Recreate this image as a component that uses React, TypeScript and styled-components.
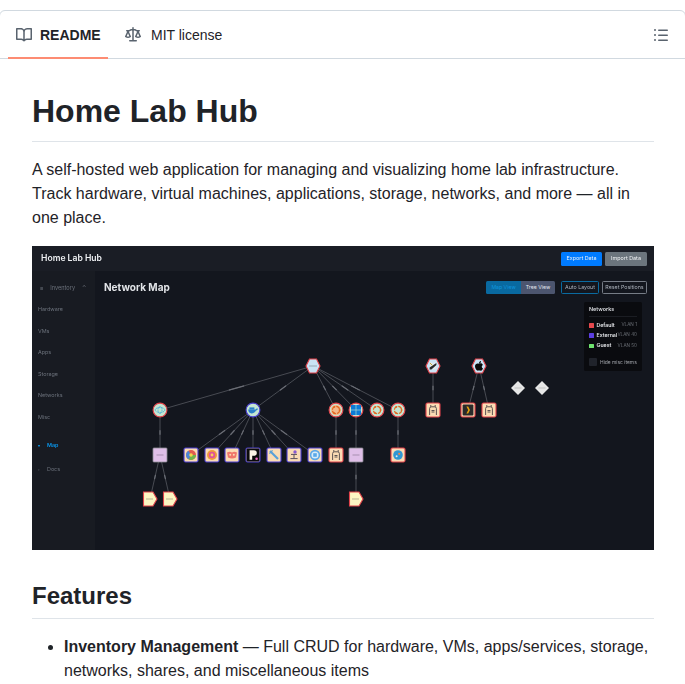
import React, { FC } from 'react';
import styled, { createGlobalStyle } from 'styled-components';

const GlobalStyle = createGlobalStyle`
    html, body {
        margin: 0;
        padding: 0;
        background: #ffffff;
    }
    #root {
        height: 684px;
        overflow: hidden;
    }
`;

const Box = styled.div`
    margin: 10px -1px 0 -1px;
    border: 1px solid #d1d9e0;
    border-radius: 6px;
    font-family: "Liberation Sans", Arial, sans-serif;
    color: #1f2328;
`;

const TabBar = styled.div`
    display: flex;
    align-items: stretch;
    height: 47px;
    padding-left: 8px;
    border-bottom: 1px solid #d1d9e0;
`;

const Tab = styled.div<{ $active?: boolean }>`
    display: flex;
    align-items: center;
    gap: ${(p) => (p.$active ? 8 : 10)}px;
    width: ${(p) => (p.$active ? '100px' : 'auto')};
    box-sizing: border-box;
    padding: 2px 8px 0;
    margin-left: ${(p) => (p.$active ? 0 : 9)}px;
    margin-bottom: -1px;
    font-size: 14px;
    font-weight: ${(p) => (p.$active ? 700 : 400)};
    border-bottom: 2px solid ${(p) => (p.$active ? '#fd8c73' : 'transparent')};
`;

const TabIcon = styled.svg`
    width: 16px;
    height: 16px;
    fill: #59636e;
    flex: none;
`;

const OutlineButton = styled.div`
    margin-left: auto;
    margin-right: 16px;
    padding-top: 1px;
    display: flex;
    align-items: center;
`;

const Article = styled.div`
    padding: 32px 31px 60px 32px;
    font-size: 16px;
    line-height: 24px;
`;

const Title = styled.h1`
    margin: 0 0 16px;
    padding-bottom: 10px;
    font-size: 32px;
    line-height: 40px;
    font-weight: 700;
    border-bottom: 1px solid #d1d9e0b3;
`;

const SubTitle = styled.h2`
    margin: 24px 0 16px;
    padding-bottom: 7px;
    font-size: 24px;
    line-height: 30px;
    font-weight: 700;
    border-bottom: 1px solid #d1d9e0b3;
`;

const Paragraph = styled.p`
    margin: 0 0 16px;
`;

const FeatureList = styled.ul`
    margin: 0;
    padding-left: 32px;
`;

/* the screenshot embedded in the readme */
const Shot = styled.div`
    width: 622px;
    height: 304px;
    margin-bottom: 31px;
    display: flex;
    flex-direction: column;
    background: #13161e;
    font-family: Inter, "Liberation Sans", sans-serif;
    line-height: 1;
    overflow: hidden;
`;

const ShotHeader = styled.div`
    height: 25px;
    flex: none;
    display: flex;
    align-items: center;
    gap: 3px;
    padding: 0 7px 0 9px;
    background: #1a1d25;
`;

const ShotBrand = styled.div`
    margin-right: auto;
    color: #eef0f3;
    font-size: 8.6px;
    font-weight: 600;
    filter: blur(0.25px);
`;

const HeaderButton = styled.div<{ $bg: string }>`
    width: ${(p) => (p.$bg === '#007bff' ? '41px' : '42px')};
    height: 14px;
    display: flex;
    align-items: center;
    justify-content: center;
    border-radius: 1.5px;
    background: ${(p) => p.$bg};
    color: #f2f4f6;
    font-size: 5.4px;
    filter: blur(0.2px);
`;

const ShotBody = styled.div`
    flex: 1;
    display: flex;
    min-height: 0;
`;

const Sidebar = styled.div`
    width: 63px;
    flex: none;
    padding-top: 14px;
    background: #181b22;
    box-sizing: border-box;
    display: flex;
    flex-direction: column;
    filter: blur(0.25px);
`;

const SideGroup = styled.div`
    display: flex;
    align-items: center;
    gap: 7px;
    padding-left: 8px;
    height: 7px;
    margin-bottom: 14.5px;
    color: #6c727c;
    font-size: 5.6px;
`;

const SideLink = styled.div<{ $active?: boolean; $top?: number }>`
    display: flex;
    align-items: center;
    gap: 6px;
    height: 7px;
    margin-top: ${(p) => p.$top ?? 0}px;
    margin-bottom: 14.5px;
    padding-left: 6px;
    color: ${(p) => (p.$active ? '#0a94e8' : '#6c727c')};
    font-size: 5.4px;
    font-weight: ${(p) => (p.$active ? 600 : 400)};
`;

const SideMark = styled.span`
    width: 3px;
    font-size: 4px;
    flex: none;
`;

const MainPanel = styled.div`
    flex: 1;
    position: relative;
    padding: 10px 7px 0 9px;
`;

const MapCanvas = styled.svg`
    position: absolute;
    inset: 0;
    width: 559px;
    height: 279px;
`;

const MainTop = styled.div`
    position: relative;
    display: flex;
    align-items: center;
    height: 13px;
    filter: blur(0.2px);
`;

const PageName = styled.div`
    margin-right: auto;
    padding-bottom: 2px;
    color: #e2e4e8;
    font-size: 10px;
    font-weight: 700;
`;

const ToggleGroup = styled.div`
    display: flex;
    margin-right: 6px;
    border-radius: 1.5px;
    overflow: hidden;
`;

const ToggleItem = styled.div<{ $on?: boolean }>`
    width: ${(p) => (p.$on ? 35 : 34)}px;
    height: 13px;
    display: flex;
    align-items: center;
    justify-content: center;
    background: ${(p) => (p.$on ? '#0969a0' : '#4c556f')};
    color: ${(p) => (p.$on ? '#0f95dc' : '#e4e7ef')};
    font-size: 5.2px;
`;

const LineButton = styled.div<{ $tone: string; $w: number }>`
    width: ${(p) => p.$w}px;
    height: 13px;
    margin-left: ${(p) => (p.$w > 40 ? 3 : 0)}px;
    box-sizing: border-box;
    display: flex;
    align-items: center;
    justify-content: center;
    border: 0.7px solid ${(p) => p.$tone};
    border-radius: 1.5px;
    color: #aab0ba;
    font-size: 5.3px;
    white-space: nowrap;
`;

const Legend = styled.div`
    position: absolute;
    top: 31px;
    right: 12px;
    width: 58px;
    height: 69px;
    box-sizing: border-box;
    padding: 5px;
    background: #0a0b0f;
    border-radius: 1.5px;
    display: flex;
    flex-direction: column;
    filter: blur(0.2px);
`;

const LegendTitle = styled.div`
    color: #d8dade;
    font-size: 5.4px;
    font-weight: 600;
    padding-bottom: 4px;
    border-bottom: 0.5px solid #1b1d23;
    margin-bottom: 3px;
`;

const LegendRow = styled.div`
    display: flex;
    align-items: center;
    height: 11px;
    font-size: 5.2px;
    color: #e4e6e9;
    font-weight: 600;
`;

const Swatch = styled.span<{ $c: string }>`
    width: 4.5px;
    height: 4.5px;
    margin-right: 3px;
    background: ${(p) => p.$c};
    border-radius: 0.5px;
`;

const Vlan = styled.span`
    margin-left: auto;
    color: #6c7077;
    font-weight: 400;
    font-size: 4.6px;
`;

const HideRow = styled.div`
    display: flex;
    align-items: center;
    gap: 3px;
    margin-top: 7px;
    color: #a2a5ab;
    font-size: 4.9px;
    white-space: nowrap;
`;

const HideCheck = styled.span`
    width: 8px;
    height: 8px;
    flex: none;
    border-radius: 1px;
    background: #20232b;
`;

const navItems = ['Hardware', 'VMs', 'Apps', 'Storage', 'Networks', 'Misc'];

const legend = [
    { name: 'Default', vlan: 'VLAN 1', color: '#e5484d' },
    { name: 'External', vlan: 'VLAN 40', color: '#5b3ee0' },
    { name: 'Guest', vlan: 'VLAN 50', color: '#6fe36f' },
];

const links: [number, number, number, number][] = [
    [313, 366, 160, 410], [313, 366, 253, 410], [313, 366, 336, 410], [313, 366, 356, 410],
    [313, 366, 377, 410], [313, 366, 398, 410],
    [160, 410, 160, 455], [160, 455, 150, 499], [160, 455, 170, 499],
    [253, 410, 191, 455], [253, 410, 212, 455], [253, 410, 232, 455], [253, 410, 253, 455],
    [253, 410, 274, 455], [253, 410, 294, 455], [253, 410, 315, 455],
    [336, 410, 336, 455], [356, 410, 356, 455], [356, 455, 356, 499], [398, 410, 398, 455],
    [433, 366, 433, 410], [479, 366, 468, 410], [479, 366, 489, 410],
];

const RED = '#e2434b';
const BLUE = '#4a3fd0';

const Hex: FC<{ x: number; y: number; children?: React.ReactNode }> = ({ x, y, children }) => (
    <g transform={`translate(${x} ${y})`}>
        <polygon points="-7,0 -3.5,-7 3.5,-7 7,0 3.5,7 -3.5,7" fill="#c9e3f5" stroke={RED} strokeWidth="1.1" />
        {children}
    </g>
);

const Round: FC<{ x: number; y: number; stroke?: string; children?: React.ReactNode }> = ({ x, y, stroke = RED, children }) => (
    <g transform={`translate(${x} ${y})`}>
        <circle r="6.9" fill="#c5e6d2" stroke={stroke} strokeWidth="1.1" />
        {children}
    </g>
);

const Tile: FC<{ x: number; y: number; stroke?: string; children?: React.ReactNode }> = ({ x, y, stroke = BLUE, children }) => (
    <g transform={`translate(${x} ${y})`}>
        <rect x="-7" y="-7" width="14" height="14" rx="1.6" fill="#fbdcb4" stroke={stroke} strokeWidth="1.1" />
        {children}
    </g>
);

const Lilac: FC<{ x: number; y: number }> = ({ x, y }) => (
    <g transform={`translate(${x} ${y})`}>
        <rect x="-7" y="-7" width="14" height="14" rx="0.8" fill="#dfbfe8" stroke="#8d8d94" strokeWidth="0.8" />
        <rect x="-3.5" y="-0.4" width="7" height="0.8" fill="#9a85a2" />
    </g>
);

const TagNode: FC<{ x: number; y: number }> = ({ x, y }) => (
    <g transform={`translate(${x} ${y})`}>
        <polygon points="-6.5,-7 3,-7 7,0 3,7 -6.5,7" fill="#fdf6c3" stroke={RED} strokeWidth="1.1" />
        <rect x="-4" y="-0.4" width="7" height="0.8" fill="#a8a288" />
    </g>
);

const Diamond: FC<{ x: number; y: number }> = ({ x, y }) => (
    <g transform={`translate(${x} ${y})`}>
        <polygon points="-7,0 0,-7 7,0 0,7" fill="#e6e6e6" />
        <rect x="-3.5" y="-0.3" width="7" height="0.6" fill="#a8a8a8" />
    </g>
);

const Ubuntu: FC = () => (
    <g>
        <circle r="3.6" fill="none" stroke="#e2681f" strokeWidth="1.1" strokeDasharray="4.6 1" />
        <circle cx="3.6" cy="0" r="0.9" fill="#e2681f" />
        <circle cx="-1.8" cy="3.1" r="0.9" fill="#e2681f" />
        <circle cx="-1.8" cy="-3.1" r="0.9" fill="#e2681f" />
    </g>
);

const Llama: FC = () => (
    <g fill="none" stroke="#4a4346" strokeWidth="0.9">
        <path d="M-3.4 5V-1.5Q-3.4-3.2-1.5-3.2H1.5Q3.4-3.2 3.4-1.5V5" />
        <path d="M-2.2-3.2V-5M2.2-3.2V-5" />
        <path d="M-1.5 0.5H1.5M-1.5 2H1.5" />
    </g>
);

const NetworkMap: FC = () => (
    <MapCanvas viewBox="95 271 559 279">
        {links.map(([x1, y1, x2, y2], i) => (
            <g key={i}>
                <line x1={x1} y1={y1} x2={x2} y2={y2} stroke="#55585f" strokeWidth="0.8" />
                <line
                    x1={x1 + (x2 - x1) * 0.45}
                    y1={y1 + (y2 - y1) * 0.45}
                    x2={x1 + (x2 - x1) * 0.55}
                    y2={y1 + (y2 - y1) * 0.55}
                    stroke="#6a6d75"
                    strokeWidth="1.2"
                />
            </g>
        ))}

        <Hex x={313} y={366}><rect x="-4" y="-0.4" width="8" height="0.8" fill="#8d9aa6" /></Hex>
        <Hex x={433} y={366}>
            <rect x="-3.4" y="-3.4" width="6.8" height="6.8" fill="#dfe8ee" />
            <path d="M-3.4 1.4L3.4-3V-1L-1.6 3.4H-3.4Z" fill="#26282a" />
            <path d="M-3-3L-.6-.6" stroke="#c8a22c" strokeWidth="1" />
        </Hex>
        <Hex x={479} y={366}>
            <path d="M0-2.2C1-3.2 3.6-3 3.8-1 2.4-.3 2.4 1.8 4 2.4 3.2 4.2 2 5 1 4.6.4 4.4-.4 4.4-1 4.6-2.2 5-4 2.4-4 .2-4-2.4-1.4-3.2 0-2.2ZM0-2.6C0-3.8.8-4.8 2-5 2.2-3.8 1.2-2.6 0-2.6Z" fill="#0a0a0a" />
        </Hex>

        <Round x={160} y={410}>
            <ellipse rx="4.8" ry="2.4" fill="none" stroke="#38a9d8" strokeWidth="1" strokeDasharray="1 0.6" />
            <ellipse rx="2" ry="3.6" fill="none" stroke="#38a9d8" strokeWidth="0.8" strokeDasharray="1 0.6" />
        </Round>
        <Round x={253} y={410} stroke={BLUE}>
            <path d="M-4.8-.4H2.6C3-1.4 3.8-1.6 5-1.2 4.4.4 3.2.6 2.8.8 2 2.6 0 3.4-1.4 3.4-3.6 3.4-4.8 1.6-4.8-.4Z" fill="#2b7fc9" />
            <rect x="-3.6" y="-2.6" width="5" height="2.2" fill="#2b7fc9" />
        </Round>
        <Round x={336} y={410}>
            <circle r="5.2" fill="#f3b98a" />
            <Ubuntu />
        </Round>
        <Round x={356} y={410}>
            <rect x="-5" y="-5" width="4.7" height="4.7" fill="#0b7cd6" />
            <rect x="0.3" y="-5" width="4.7" height="4.7" fill="#0b7cd6" />
            <rect x="-5" y="0.3" width="4.7" height="4.7" fill="#0b7cd6" />
            <rect x="0.3" y="0.3" width="4.7" height="4.7" fill="#0b7cd6" />
        </Round>
        <Round x={377} y={410}><Ubuntu /></Round>
        <Round x={398} y={410}><Ubuntu /></Round>

        <Lilac x={160} y={455} />
        <Lilac x={356} y={455} />

        <Tile x={191} y={455}>
            <circle r="5" fill="#e05a4f" />
            <path d="M0 0L5 0A5 5 0 0 1 -2.5 4.3Z" fill="#6cb44e" />
            <path d="M0 0L-2.5 4.3A5 5 0 0 1 -2.5-4.3Z" fill="#4a86d8" />
            <circle r="1.8" fill="#f4d44c" />
        </Tile>
        <Tile x={212} y={455}>
            <circle r="5" fill="#ee9a3c" />
            <circle r="3.2" fill="#e0509a" />
            <circle r="1.4" fill="#f7d25a" />
        </Tile>
        <Tile x={232} y={455}>
            <path d="M-5-2.4Q-2-4 0-2.4 2-4 5-2.4L4 2.6Q0 4.4-4 2.6Z" fill="#f0766a" />
            <circle cx="-1.8" cy="-.2" r="1" fill="#fbdcb4" />
            <circle cx="1.8" cy="-.2" r="1" fill="#fbdcb4" />
        </Tile>
        <Tile x={253} y={455}>
            <rect x="-6.4" y="-6.4" width="12.8" height="12.8" rx="1" fill="#0a0a0a" />
            <path d="M-3.4-4.8H1Q3.8-4.8 3.8-2 3.8.8 1 .8H-.8V4.8H-3.4Z" fill="#fbf4e6" />
            <circle cx="3.6" cy="3.8" r="1.3" fill="#f06ac0" />
        </Tile>
        <Tile x={274} y={455}>
            <path d="M-4-4L4 4" stroke="#5aa0d8" strokeWidth="2.2" />
            <path d="M-4.6-1.4L-1.4-4.6" stroke="#5aa0d8" strokeWidth="1.2" />
        </Tile>
        <Tile x={294} y={455}>
            <path d="M-3.6 3.6H3.6M0 3.6V-1M-3-.6H3" stroke="#5a5060" strokeWidth="1" fill="none" />
            <circle cx="1" cy="-3" r="1.7" fill="#8a5ad0" />
        </Tile>
        <Tile x={315} y={455}>
            <circle r="5.2" fill="#5aa8e8" />
            <circle r="3.6" fill="#d8ecf8" />
            <rect x="-1.8" y="-1.8" width="3.6" height="3.6" fill="#5aa8e8" />
        </Tile>
        <Tile x={336} y={455} stroke={RED}><Llama /></Tile>
        <Tile x={398} y={455} stroke={RED}>
            <circle r="4.8" fill="#2f97d4" />
            <circle cx="1.2" cy="-1.2" r="1.1" fill="#f0824a" />
            <circle cx="-1.4" cy="1.2" r="1" fill="#d8ecf8" />
        </Tile>
        <Tile x={433} y={410} stroke={RED}><Llama /></Tile>
        <Tile x={468} y={410} stroke={RED}>
            <rect x="-5.4" y="-5.4" width="10.8" height="10.8" rx="1" fill="#2a2a2a" />
            <path d="M-1.6-3.4H.2L2 0 .2 3.4H-1.6L.2 0Z" fill="#e5a00d" />
        </Tile>
        <Tile x={489} y={410} stroke={RED}><Llama /></Tile>

        <TagNode x={150} y={499} />
        <TagNode x={170} y={499} />
        <TagNode x={356} y={499} />

        <Diamond x={518} y={388} />
        <Diamond x={542} y={388} />
    </MapCanvas>
);

const AppScreenshot: FC = () => (
    <Shot>
        <ShotHeader>
            <ShotBrand>Home Lab Hub</ShotBrand>
            <HeaderButton $bg="#007bff">Export Data</HeaderButton>
            <HeaderButton $bg="#6c757d">Import Data</HeaderButton>
        </ShotHeader>
        <ShotBody>
            <Sidebar>
                <SideGroup>≡ <span>Inventory</span> <span>⌃</span></SideGroup>
                {navItems.map((item) => <SideLink key={item}>{item}</SideLink>)}
                <SideLink $active $top={7}><SideMark>▾</SideMark><span>Map</span></SideLink>
                <SideLink $top={2}><SideMark>▫</SideMark><span>Docs</span></SideLink>
            </Sidebar>
            <MainPanel>
                <NetworkMap />
                <MainTop>
                    <PageName>Network Map</PageName>
                    <ToggleGroup>
                        <ToggleItem $on>Map View</ToggleItem>
                        <ToggleItem>Tree View</ToggleItem>
                    </ToggleGroup>
                    <LineButton $tone="#0a6aa0" $w={38}>Auto Layout</LineButton>
                    <LineButton $tone="#767c86" $w={45}>Reset Positions</LineButton>
                </MainTop>
                <Legend>
                    <LegendTitle>Networks</LegendTitle>
                    {legend.map((row) => (
                        <LegendRow key={row.name}>
                            <Swatch $c={row.color} />
                            {row.name}
                            <Vlan>{row.vlan}</Vlan>
                        </LegendRow>
                    ))}
                    <HideRow><HideCheck />Hide misc items</HideRow>
                </Legend>
            </MainPanel>
        </ShotBody>
    </Shot>
);

export default function App() {
    return (
        <>
            <GlobalStyle />
            <Box>
                <TabBar>
                    <Tab $active>
                        <TabIcon viewBox="0 0 16 16">
                            <path d="M0 1.75A.75.75 0 0 1 .75 1h4.253c1.227 0 2.317.59 3 1.501A3.743 3.743 0 0 1 11.006 1h4.245a.75.75 0 0 1 .75.75v10.5a.75.75 0 0 1-.75.75h-4.507a2.25 2.25 0 0 0-1.591.659l-.622.621a.75.75 0 0 1-1.06 0l-.622-.621A2.25 2.25 0 0 0 5.258 13H.75a.75.75 0 0 1-.75-.75Zm7.251 10.324.004-5.073-.002-2.253A2.25 2.25 0 0 0 5.003 2.5H1.5v9h3.757a3.75 3.75 0 0 1 1.994.574ZM8.755 4.75l-.004 7.322a3.752 3.752 0 0 1 1.992-.572H14.5v-9h-3.495a2.25 2.25 0 0 0-2.25 2.25Z" />
                        </TabIcon>
                        README
                    </Tab>
                    <Tab>
                        <TabIcon viewBox="0 0 16 16">
                            <path d="M8.75.75V2h.985c.304 0 .603.08.867.231l1.29.736c.038.022.08.033.124.033h2.234a.75.75 0 0 1 0 1.5h-.427l2.111 4.692a.75.75 0 0 1-.154.838l-.53-.53.529.531-.001.002-.002.002-.006.006-.006.005-.01.01-.045.04c-.21.176-.441.327-.686.45C14.556 10.78 13.88 11 13 11a4.498 4.498 0 0 1-2.023-.454 3.544 3.544 0 0 1-.686-.45l-.045-.04-.016-.015-.006-.006-.004-.004v-.001a.75.75 0 0 1-.154-.838L12.178 4.5h-.162c-.305 0-.604-.079-.868-.231l-1.29-.736a.245.245 0 0 0-.124-.033H8.75V13h2.5a.75.75 0 0 1 0 1.5h-6.5a.75.75 0 0 1 0-1.5h2.5V3.5h-.984a.245.245 0 0 0-.124.033l-1.289.737c-.265.15-.564.23-.869.23h-.162l2.112 4.692a.75.75 0 0 1-.154.838l-.53-.53.529.531-.001.002-.002.002-.006.006-.016.015-.045.04c-.21.176-.441.327-.686.45C4.556 10.78 3.88 11 3 11a4.498 4.498 0 0 1-2.023-.454 3.544 3.544 0 0 1-.686-.45l-.045-.04-.016-.015-.006-.006-.004-.004v-.001a.75.75 0 0 1-.154-.838L2.178 4.5H1.75a.75.75 0 0 1 0-1.5h2.234a.249.249 0 0 0 .125-.033l1.288-.737c.265-.15.564-.23.869-.23h.984V.75a.75.75 0 0 1 1.5 0Zm2.945 8.477c.285.135.718.273 1.305.273s1.02-.138 1.305-.273L13 6.327Zm-10 0c.285.135.718.273 1.305.273s1.02-.138 1.305-.273L3 6.327Z" />
                        </TabIcon>
                        MIT license
                    </Tab>
                    <OutlineButton>
                        <TabIcon viewBox="0 0 16 16">
                            <path d="M5.75 2.5h8.5a.75.75 0 0 1 0 1.5h-8.5a.75.75 0 0 1 0-1.5Zm0 5h8.5a.75.75 0 0 1 0 1.5h-8.5a.75.75 0 0 1 0-1.5Zm0 5h8.5a.75.75 0 0 1 0 1.5h-8.5a.75.75 0 0 1 0-1.5ZM2 14a1 1 0 1 1 0-2 1 1 0 0 1 0 2Zm1-6a1 1 0 1 1-2 0 1 1 0 0 1 2 0ZM2 4a1 1 0 1 1 0-2 1 1 0 0 1 0 2Z" />
                        </TabIcon>
                    </OutlineButton>
                </TabBar>
                <Article>
                    <Title>Home Lab Hub</Title>
                    <Paragraph>
                        A self-hosted web application for managing and visualizing home lab infrastructure.
                        Track hardware, virtual machines, applications, storage, networks, and more — all in
                        one place.
                    </Paragraph>
                    <AppScreenshot />
                    <SubTitle>Features</SubTitle>
                    <FeatureList>
                        <li>
                            <strong>Inventory Management</strong> — Full CRUD for hardware, VMs, apps/services,
                            storage, networks, shares, and miscellaneous items
                        </li>
                    </FeatureList>
                </Article>
            </Box>
        </>
    );
}
